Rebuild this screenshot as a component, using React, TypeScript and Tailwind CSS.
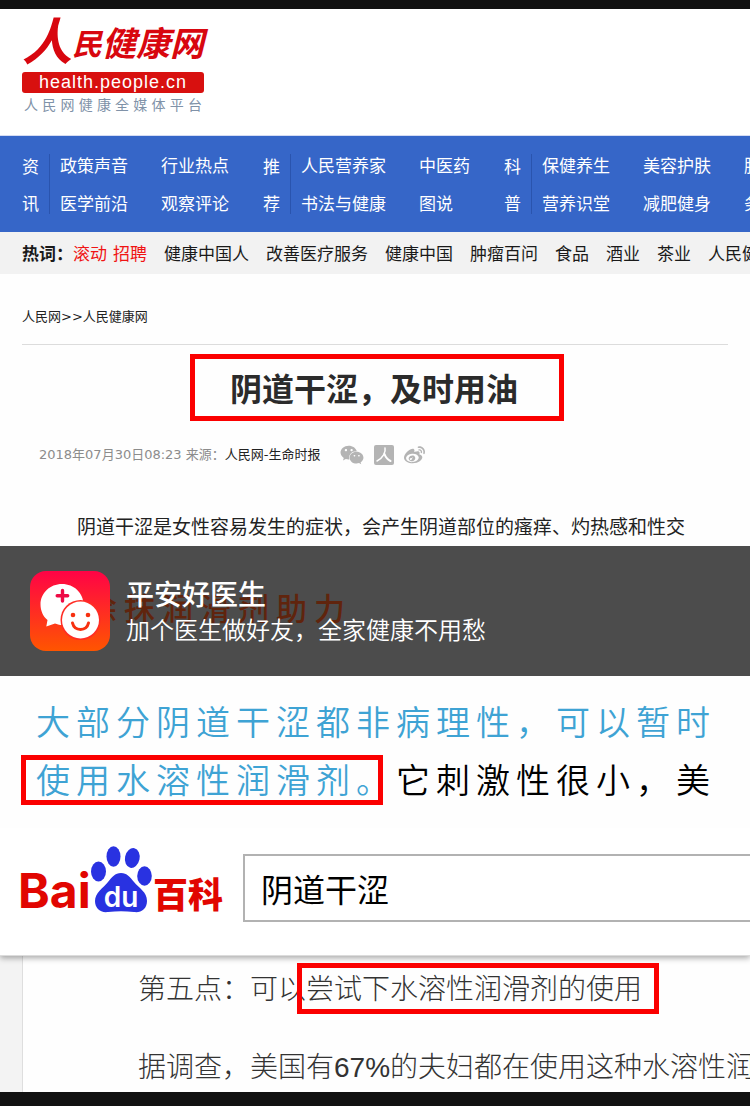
import { FaWeibo, FaWeixin } from "react-icons/fa"

interface NavGroup {
  label: string[]
  columns: string[][]
}

const navGroups: NavGroup[] = [
  {
    label: ["资", "讯"],
    columns: [
      ["政策声音", "医学前沿"],
      ["行业热点", "观察评论"],
    ],
  },
  {
    label: ["推", "荐"],
    columns: [
      ["人民营养家", "书法与健康"],
      ["中医药", "图说"],
    ],
  },
  {
    label: ["科", "普"],
    columns: [
      ["保健养生", "营养识堂"],
      ["美容护肤", "减肥健身"],
      ["肿瘤防治", "务实养生"],
    ],
  },
]

const hotWords = ["健康中国人", "改善医疗服务", "健康中国", "肿瘤百问", "食品", "酒业", "茶业", "人民健康"]

function SiteHeader() {
  return (
    <header className="border-b border-[#d5dcf3] bg-white px-[22px] pt-2 pb-[21px]">
      <a href="#" className="block w-[182px]">
        <span className="mb-[7px] flex h-12 items-end justify-between pr-1 font-bold text-[#d8070f] italic">
          <span className="text-[50px] leading-[54px]">人</span>
          <span className="text-[30px] leading-[46px]">民</span>
          <span className="text-[34px] leading-[46px]">健</span>
          <span className="text-[34px] leading-[46px]">康</span>
          <span className="text-[34px] leading-[46px]">网</span>
        </span>
        <span className="block rounded-[3px] bg-[#d8100f] text-center font-['Liberation_Sans',sans-serif] text-lg leading-[21px] tracking-[1px] text-white">
          health.people.cn
        </span>
        <span className="mt-px flex justify-between px-[2px] text-sm leading-5 text-[#8092a8]">
          {"人民网健康全媒体平台".split("").map((char, i) => (
            <span key={i}>{char}</span>
          ))}
        </span>
      </a>
    </header>
  )
}

function MainNav() {
  return (
    <nav className="flex overflow-hidden bg-[#3666c8] py-[10px] pl-[22px] text-[17px] whitespace-nowrap text-white">
      {navGroups.map((group) => (
        <div key={group.label.join("")} className="mr-[34px] flex shrink-0 items-center">
          <div className="flex flex-col leading-[37px]">
            {group.label.map((char) => (
              <span key={char}>{char}</span>
            ))}
          </div>
          <div className="ml-[10px] h-[60px] border-l border-[#2a54ae]"></div>
          <div className="ml-[10px] flex gap-[33px] leading-[38px]">
            {group.columns.map((column) => (
              <ul key={column[0]}>
                {column.map((item) => (
                  <li key={item}>
                    <a href="#">{item}</a>
                  </li>
                ))}
              </ul>
            ))}
          </div>
        </div>
      ))}
    </nav>
  )
}

function HotWords() {
  return (
    <div className="flex overflow-hidden bg-[#f2f2f2] pl-[22px] text-[17px] leading-[42px] whitespace-nowrap text-[#1a1a1a]">
      <strong className="shrink-0">热词：</strong>
      <div className="flex shrink-0 gap-[6px] text-[#f01414]">
        <a href="#">滚动</a>
        <a href="#">招聘</a>
      </div>
      {hotWords.map((word) => (
        <a key={word} href="#" className="ml-[17px] shrink-0">
          {word}
        </a>
      ))}
    </div>
  )
}

function Article() {
  return (
    <article className="overflow-hidden bg-[#fefefe] px-[22px] pt-8 pb-[5px]">
      <div className="border-b border-[#dcdcdc] pb-4 font-['DejaVu_Sans','Noto_Sans_CJK_SC',sans-serif] text-[13px] leading-[22px] text-[#222]">
        <a href="#">人民网</a>&gt;&gt;<a href="#">人民健康网</a>
      </div>
      <div className="mt-[9px] flex justify-center pl-1">
        <h1 className="border-[5px] border-[#fb0000] pr-[41px] pl-[35px] text-[32px] leading-[57px] font-bold text-[#2b2b2b]">
          阴道干涩，及时用油
        </h1>
      </div>
      <div className="mt-[22px] flex items-center pl-[17px] font-['DejaVu_Sans','Noto_Sans_CJK_SC',sans-serif] text-[13px] leading-6 text-[#8c8c8c]">
        <span>2018年07月30日08:23 来源：</span>
        <a href="#" className="text-[#222]">
          人民网-生命时报
        </a>
        <div className="ml-5 flex items-center gap-[10px] text-[#b4b4b4]">
          <button type="button" aria-label="微信">
            <FaWeixin className="h-6 w-6" />
          </button>
          <button type="button" aria-label="人民微博" className="h-5 w-5 rounded-[2px] bg-[#b4b4b4]">
            <svg viewBox="0 0 20 20" className="h-5 w-5" fill="none" stroke="#fff" strokeLinecap="round">
              <path d="M11 3c1 4-2 10-8 13" strokeWidth="1.500" />
              <path d="M10.500 9c1 3 3 5.500 6 7" strokeWidth="2" />
            </svg>
          </button>
          <button type="button" aria-label="新浪微博">
            <FaWeibo className="h-[21px] w-[21px]" />
          </button>
        </div>
      </div>
      <p className="mt-11 pl-[17px] indent-[2em] text-[19px] leading-[30px] whitespace-nowrap text-[#222]">
        阴道干涩是女性容易发生的症状，会产生阴道部位的瘙痒、灼热感和性交
      </p>
    </article>
  )
}

function DoctorIcon() {
  return (
    <svg viewBox="0 0 80 80" className="relative h-20 w-20 shrink-0" aria-hidden="true">
      <defs>
        <linearGradient id="doctor-bg" x1="0" y1="0" x2="0" y2="1">
          <stop offset="0" stopColor="#ff0346" />
          <stop offset="1" stopColor="#ff5500" />
        </linearGradient>
      </defs>
      <rect width="80" height="80" rx="16" fill="url(#doctor-bg)" />
      <path
        d="M32 13c12 0 21.500 9 21.500 20.500S44 54 32 54c-1 0-2-.1-3-.3L25 52.500l-8.700 3 1.200-6.500C13 45.500 10.500 39.500 10.500 33.500 10.500 22 20 13 32 13z"
        fill="#fff"
      />
      <path d="M32.500 19.500v10.500M27.200 24.700h10.500" stroke="#ee0a45" strokeWidth="3.400" strokeLinecap="round" />
      <circle cx="50.500" cy="49" r="20" fill="#ff2c24" />
      <circle cx="50.500" cy="49" r="18.500" fill="#fff" />
      <circle cx="43" cy="44" r="2.300" fill="#f7300f" />
      <circle cx="58" cy="44" r="2.300" fill="#f7300f" />
      <path d="M42.500 52c2 8.500 14 8.500 16 0" fill="none" stroke="#f7300f" strokeWidth="3" strokeLinecap="round" />
    </svg>
  )
}

function DoctorBanner() {
  return (
    <section className="relative flex items-center gap-4 overflow-hidden bg-[#4c4c4c] px-[30px] py-[25px] whitespace-nowrap text-white">
      {/* heading of the page underneath, showing through the banner */}
      <span className="absolute top-[38px] left-[86px] text-[31px] leading-[46px] font-medium tracking-[7px] text-[#60240d]">
        涂抹润滑剂助力
      </span>
      <DoctorIcon />
      <div className="relative">
        <h2 className="text-[28px] leading-9 font-medium">平安好医生</h2>
        <p className="text-2xl leading-9 font-[350]">加个医生做好友，全家健康不用愁</p>
      </div>
    </section>
  )
}

function Quote() {
  return (
    <section className="overflow-hidden bg-[#fefefe] pt-4 pb-5 pl-9 text-[34px] leading-[58px] font-[350] tracking-[6px] whitespace-nowrap text-[#3ea3d4]">
      <p>大部分阴道干涩都非病理性，可以暂时</p>
      <p>
        <span className="relative">
          使用水溶性润滑剂。
          <span className="absolute top-px right-[13px] -bottom-[2px] -left-[15px] border-[5px] border-[#fb0000]"></span>
        </span>
        <span className="text-black">它刺激性很小，美</span>
      </p>
    </section>
  )
}

function BaikeLogo() {
  return (
    <a href="#" className="flex h-[68px] shrink-0 items-end text-[#e10601]">
      <span className="w-[73px] font-['Inter',sans-serif] text-[48px] leading-[46px] font-bold">Bai</span>
      <svg viewBox="0 0 62 68" className="h-[68px] w-[62px]">
        <g fill="#2932e1">
          <ellipse cx="7.500" cy="25.500" rx="7.500" ry="10" />
          <ellipse cx="22.500" cy="10.500" rx="7" ry="10.300" />
          <ellipse cx="41.300" cy="12" rx="7.300" ry="10" transform="rotate(12 41.300 12)" />
          <ellipse cx="53.500" cy="30" rx="7.300" ry="9.700" />
          <path d="M30 27c6 0 9 4 13 9 5 6 13 10 13 19 0 8-6 12-13 11-9-1-17-1-26 0C9 67 4 62 4 55c0-8 8-13 13-19 4-5 7-9 13-9z" />
        </g>
        <text x="30" y="61" textAnchor="middle" fill="#fff" fontFamily="Inter, sans-serif" fontSize="28" fontWeight="600">
          du
        </text>
      </svg>
      <span className="text-[35px] leading-[42px] font-black">百科</span>
    </a>
  )
}

function BaikeSection() {
  return (
    <section className="overflow-hidden bg-white">
      <div className="relative flex items-start border-b border-[#dcdcdc] bg-white pt-[18px] pb-[33px] pl-[18px] shadow-[0_2px_6px_rgba(0,0,0,0.35)]">
        <BaikeLogo />
        <input
          type="text"
          aria-label="搜索词条"
          defaultValue="阴道干涩"
          className="mt-2 ml-5 h-[68px] min-w-0 flex-1 border-2 border-r-0 border-[#b2b2b2] bg-white px-4 text-[32px] text-black outline-none"
        />
      </div>
      <div className="flex bg-[#f3f3f3] pl-[22px]">
        <div className="w-full overflow-hidden border-l border-[#dedede] bg-[#fefefe] pt-[14px] pb-1 pl-[115px] font-['Liberation_Sans','Noto_Sans_CJK_SC',sans-serif] text-[28px] font-light whitespace-nowrap text-[#333]">
          <p className="leading-10">
            第五点：可以
            <span className="relative">
              尝试下水溶性润滑剂的使用
              <span className="absolute -top-[11px] -right-[17px] -bottom-[9px] -left-[9px] border-[5px] border-[#fb0000]"></span>
            </span>
          </p>
          <p className="mt-[38px] leading-10">据调查，美国有67%的夫妇都在使用这种水溶性润滑</p>
        </div>
      </div>
    </section>
  )
}

export default function App() {
  return (
    <main className="overflow-hidden border-t-[9px] border-b-[14px] border-[#111] bg-white font-['Noto_Sans_CJK_SC',sans-serif]">
      <SiteHeader />
      <MainNav />
      <HotWords />
      <Article />
      <DoctorBanner />
      <Quote />
      <BaikeSection />
    </main>
  )
}
